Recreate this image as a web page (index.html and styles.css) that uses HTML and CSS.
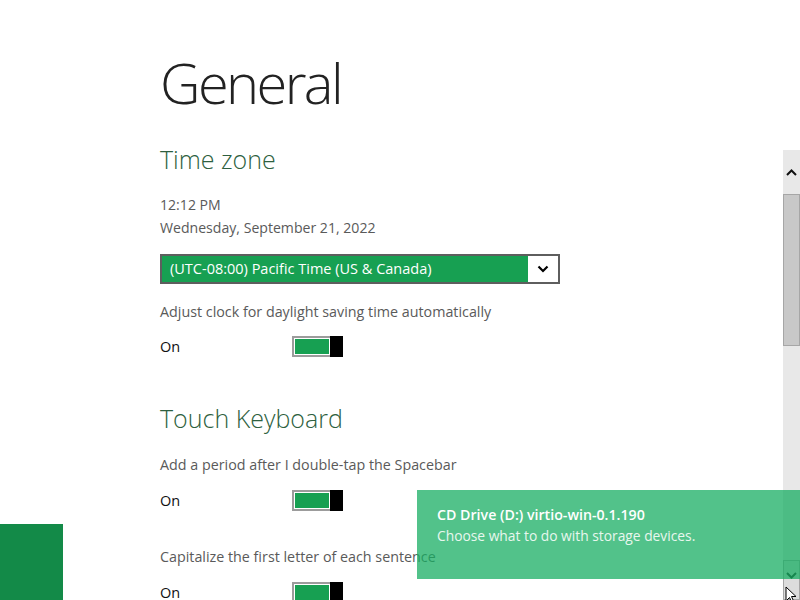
FILE: index.html
```html
<!DOCTYPE html>
<html lang="en">
<head>
<meta charset="utf-8">
<title>General</title>
<link rel="stylesheet" href="styles.css">
</head>
<body>
<main class="page">
  <h1 class="title">General</h1>

  <section class="group">
    <h2 class="group-title">Time zone</h2>
    <p class="info first">12:12 PM</p>
    <p class="info">Wednesday, September 21, 2022</p>
    <div class="select">
      <span class="select-value">(UTC-08:00) Pacific Time (US &amp; Canada)</span>
      <span class="select-btn">
        <svg width="12" height="8" viewBox="0 0 12 8"><path d="M1.5 1.5 L6 6 L10.5 1.5" fill="none" stroke="#000" stroke-width="2.2"/></svg>
      </span>
    </div>
    <p class="label after-select">Adjust clock for daylight saving time automatically</p>
    <div class="toggle-row"><span class="state">On</span><span class="toggle"><span class="track"></span><span class="thumb"></span></span></div>
  </section>

  <section class="group second">
    <h2 class="group-title">Touch Keyboard</h2>
    <p class="label first-label">Add a period after I double-tap the Spacebar</p>
    <div class="toggle-row"><span class="state">On</span><span class="toggle"><span class="track"></span><span class="thumb"></span></span></div>
    <p class="label spaced">Capitalize the first letter of each sentence</p>
    <div class="toggle-row"><span class="state">On</span><span class="toggle"><span class="track"></span><span class="thumb"></span></span></div>
  </section>
</main>

<div class="tile"></div>

<div class="scrollbar">
  <div class="sb-btn sb-up">
    <svg width="11" height="7" viewBox="0 0 11 7"><path d="M1 6 L5.5 1.5 L10 6" fill="none" stroke="#111" stroke-width="2"/></svg>
  </div>
  <div class="sb-thumb"></div>
  <div class="sb-track"></div>
  <div class="sb-btn sb-down">
    <svg width="11" height="7" viewBox="0 0 11 7"><path d="M1 1 L5.5 5.5 L10 1" fill="none" stroke="#111" stroke-width="2"/></svg>
  </div>
</div>

<div class="toast">
  <div class="toast-title">CD Drive (D:) virtio-win-0.1.190</div>
  <div class="toast-text">Choose what to do with storage devices.</div>
</div>

<svg class="cursor" width="12" height="18" viewBox="0 0 12 18"><path d="M1 1 L1 15 L4.5 11.5 L7 17 L9 16 L6.5 10.5 L11 10.5 Z" fill="#fff" stroke="#000" stroke-width="1"/></svg>
</body>
</html>
```

FILE: styles.css
```css
html, body {
  margin: 0;
  padding: 0;
  background: #ffffff;
  width: 800px;
  height: 600px;
  overflow: hidden;
}

body {
  font-family: "Open Sans", "Noto Sans", "Liberation Sans", sans-serif;
  color: #000;
  position: relative;
}

.page {
  padding: 44px 0 0 160px;
}

.title {
  margin: 0;
  font-size: 56px;
  font-weight: 300;
  line-height: 76px;
  color: #222;
  letter-spacing: -2.6px;
}

.group-title {
  margin: 21px 0 0;
  font-size: 25px;
  font-weight: 300;
  line-height: 36px;
  color: #2e5f40;
}

.info, .label {
  margin: 0;
  font-size: 14.3px;
  line-height: 23px;
  color: #5a5a5a;
}

.info { font-size: 14.1px; }

.info.first { margin-top: 16px; }

.select {
  margin-top: 15px;
  width: 400px;
  height: 30px;
  box-sizing: border-box;
  border: 2px solid #5e5e5e;
  display: flex;
  background: #17a052;
}

.select-value {
  flex: 1;
  color: #fff;
  font-size: 14.5px;
  line-height: 26px;
  padding-left: 8px;
}

.select-btn {
  width: 30px;
  background: #fff;
  display: flex;
  align-items: center;
  justify-content: center;
}

.after-select { margin-top: 16px; }

.toggle-row {
  margin-top: 12px;
  display: flex;
  align-items: center;
  height: 23px;
}

.state {
  width: 132px;
  font-size: 14.5px;
  line-height: 23px;
  color: #111;
}

.toggle {
  display: flex;
  width: 51px;
  height: 21px;
}

.track {
  flex: 1;
  border: 2px solid #9c9c9c;
  border-right: none;
  background: #17a052;
  box-shadow: inset 0 0 0 1px #fff;
}

.thumb {
  width: 13px;
  background: #000;
}

.group.second .group-title { margin-top: 42px; }

.first-label { margin-top: 17px; }

.group.second .toggle-row { margin-top: 13px; }

.spaced { margin-top: 33px; }

.tile {
  position: absolute;
  left: 0;
  top: 524px;
  width: 63px;
  height: 76px;
  background: #138a48;
}

.scrollbar {
  position: absolute;
  left: 783px;
  top: 150px;
  width: 17px;
  height: 450px;
  background: #e8e8e8;
  display: flex;
  flex-direction: column;
}

.sb-btn {
  height: 44px;
  display: flex;
  align-items: center;
  justify-content: center;
  background: #e8e8e8;
}

.sb-thumb {
  height: 152px;
  background: #c8c8c8;
  border: 1px solid #a6a6a6;
  box-sizing: border-box;
}

.sb-track { flex: 1; }

.sb-down {
  height: 40px;
  box-sizing: border-box;
  border: 1px solid #a6a6a6;
  background: #dcdcdc;
  align-items: flex-start;
  padding-top: 11px;
}

.toast {
  position: absolute;
  left: 417px;
  top: 490px;
  width: 383px;
  height: 89px;
  box-sizing: border-box;
  padding: 15px 20px 0;
  background: rgba(24, 173, 99, 0.75);
  color: #fff;
}

.toast-title {
  font-size: 14.2px;
  font-weight: 600;
  line-height: 20px;
}

.toast-text {
  font-size: 13.8px;
  line-height: 21px;
  color: #e8f7ee;
}

.cursor {
  position: absolute;
  left: 785px;
  top: 586px;
}
```
